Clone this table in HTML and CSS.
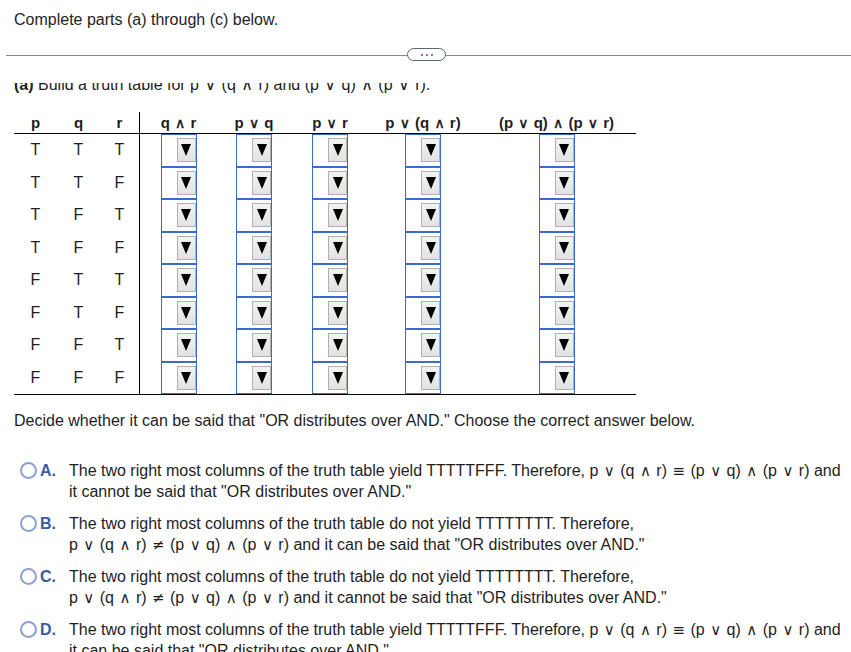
FILE: index.html
```html
<!DOCTYPE html>
<html>
<head>
<meta charset="utf-8">
<link rel="stylesheet" href="styles.css">
</head>
<body>
<div class="top">Complete parts (a) through (c) below.</div>
<div class="divider">
  <div class="pill"><span class="dot"></span><span class="dot"></span><span class="dot"></span></div>
</div>
<div class="scroll">
  <div class="content">
    <div class="part"><b>(a)</b> Build a truth table for p <span class="op">∨</span> (q <span class="op">∧</span> r) and (p <span class="op">∨</span> q) <span class="op">∧</span> (p <span class="op">∨</span> r).</div>
    <div class="truth head">
      <div class="hd">p</div><div class="hd">q</div><div class="hd">r</div>
      <div class="hd sep">q <span class="op">∧</span> r</div><div class="hd">p <span class="op">∨</span> q</div><div class="hd">p <span class="op">∨</span> r</div><div class="hd">p <span class="op">∨</span> (q <span class="op">∧</span> r)</div><div class="hd">(p <span class="op">∨</span> q) <span class="op">∧</span> (p <span class="op">∨</span> r)</div>
    </div>
    <div class="truth body" id="rows"></div>
    <p class="decide">Decide whether it can be said that "OR distributes over AND." Choose the correct answer below.</p>
    <div class="options">
      <div class="opt"><span class="radio"></span><span class="letter">A.</span><span class="otext">The two right most columns of the truth table yield TTTTTFFF. Therefore, p <span class="op">∨</span> (q <span class="op">∧</span> r) <span class="op">≡</span> (p <span class="op">∨</span> q) <span class="op">∧</span> (p <span class="op">∨</span> r) and<br>it cannot be said that "OR distributes over AND."</span></div>
      <div class="opt"><span class="radio"></span><span class="letter">B.</span><span class="otext">The two right most columns of the truth table do not yield TTTTTTTT. Therefore,<br>p <span class="op">∨</span> (q <span class="op">∧</span> r) <span class="op">≠</span> (p <span class="op">∨</span> q) <span class="op">∧</span> (p <span class="op">∨</span> r) and it can be said that "OR distributes over AND."</span></div>
      <div class="opt"><span class="radio"></span><span class="letter">C.</span><span class="otext">The two right most columns of the truth table do not yield TTTTTTTT. Therefore,<br>p <span class="op">∨</span> (q <span class="op">∧</span> r) <span class="op">≠</span> (p <span class="op">∨</span> q) <span class="op">∧</span> (p <span class="op">∨</span> r) and it cannot be said that "OR distributes over AND."</span></div>
      <div class="opt"><span class="radio"></span><span class="letter">D.</span><span class="otext">The two right most columns of the truth table yield TTTTTFFF. Therefore, p <span class="op">∨</span> (q <span class="op">∧</span> r) <span class="op">≡</span> (p <span class="op">∨</span> q) <span class="op">∧</span> (p <span class="op">∨</span> r) and<br>it can be said that "OR distributes over AND."</span></div>
    </div>
  </div>
</div>
<script>
  var vals = [["T","T","T"],["T","T","F"],["T","F","T"],["T","F","F"],["F","T","T"],["F","T","F"],["F","F","T"],["F","F","F"]];
  var rows = document.getElementById("rows");
  var html = "";
  vals.forEach(function (v) {
    html += '<div class="cell">' + v[0] + '</div><div class="cell">' + v[1] + '</div><div class="cell">' + v[2] + '</div>';
    for (var i = 0; i < 5; i++) {
      html += '<div class="cell' + (i === 0 ? ' sep' : '') + '"><div class="sel"><div class="btn"><span class="tri"></span></div></div></div>';
    }
  });
  rows.innerHTML = html;
</script>
</body>
</html>
```

FILE: styles.css
```css
html, body {
  margin: 0;
  padding: 0;
  background: #fff;
}
body {
  font-family: "Liberation Sans", Arial, sans-serif;
  font-size: 16px;
  color: #1e1e1e;
  width: 851px;
  height: 652px;
  overflow: hidden;
}
.top {
  padding: 10px 14px 0 14px;
  line-height: 20px;
  height: 35px;
  box-sizing: border-box;
}
.divider {
  position: relative;
  margin: 20px 0 0 6px;
  height: 1px;
  background: #7d8796;
}
.pill {
  position: absolute;
  left: 401px;
  top: -7px;
  width: 39px;
  height: 13px;
  box-sizing: border-box;
  border: 1.5px solid #5d6877;
  border-radius: 7px;
  background: #fff;
  display: flex;
  align-items: center;
  justify-content: center;
  gap: 3px;
}
.dot {
  width: 2px;
  height: 2px;
  background: #4d5868;
  border-radius: 1px;
}
.scroll {
  margin-top: 27px;
  height: 569px;
  overflow: hidden;
}
.content {
  margin-top: -8.5px;
  padding-left: 14px;
}
.part {
  line-height: 20px;
  height: 20px;
  white-space: nowrap;
}
.op {
  font-family: "DejaVu Sans", sans-serif;
  padding: 0 1px;
  line-height: 1;
}
.truth {
  display: grid;
  grid-template-columns: 43px 43px 39px 78px 74px 78px 108px 159px;
  width: 622px;
}
.truth.head {
  margin-top: 17.5px;
}
.hd {
  font-weight: bold;
  font-size: 15px;
  line-height: 21px;
  height: 21px;
  text-align: center;
  border-bottom: 1px solid #000;
  white-space: nowrap;
}
.hd .op {
  font-weight: normal;
  font-size: 14px;
  -webkit-text-stroke: 0.4px #000;
}
.truth.body {
  border-bottom: 1px solid #000;
}
.cell {
  height: 32.5px;
  display: flex;
  align-items: center;
  justify-content: center;
}
.sep {
  border-left: 1px solid #000;
}
.sel {
  width: 36px;
  height: 32.5px;
  box-sizing: border-box;
  border: 1px solid #3a69d0;
  display: flex;
  justify-content: flex-end;
  align-items: flex-start;
  padding-top: 3px;
}
.btn {
  width: 19px;
  height: 24px;
  box-sizing: border-box;
  border: 1px solid #b0b0b0;
  background: linear-gradient(#f3f3f3, #e2e2e2);
  display: flex;
  align-items: center;
  justify-content: center;
}
.tri {
  width: 0;
  height: 0;
  border-left: 5px solid transparent;
  border-right: 5px solid transparent;
  border-top: 12px solid #000;
}
.decide {
  margin: 15.5px 0 0 0;
  line-height: 20px;
}
.options {
  margin-top: 29.5px;
  display: flex;
  flex-direction: column;
  gap: 11px;
}
.opt {
  display: flex;
  align-items: flex-start;
  line-height: 21px;
  white-space: nowrap;
}
.otext .op {
  font-size: 15px;
}
.radio {
  width: 17px;
  height: 17px;
  box-sizing: border-box;
  border: 2px solid #8ba0d2;
  border-radius: 50%;
  margin: 2px 3px 0 6px;
  flex: none;
}
.letter {
  font-weight: bold;
  color: #3b5aa6;
  width: 29px;
  flex: none;
}
.otext {
  color: #1e1e1e;
}
```
